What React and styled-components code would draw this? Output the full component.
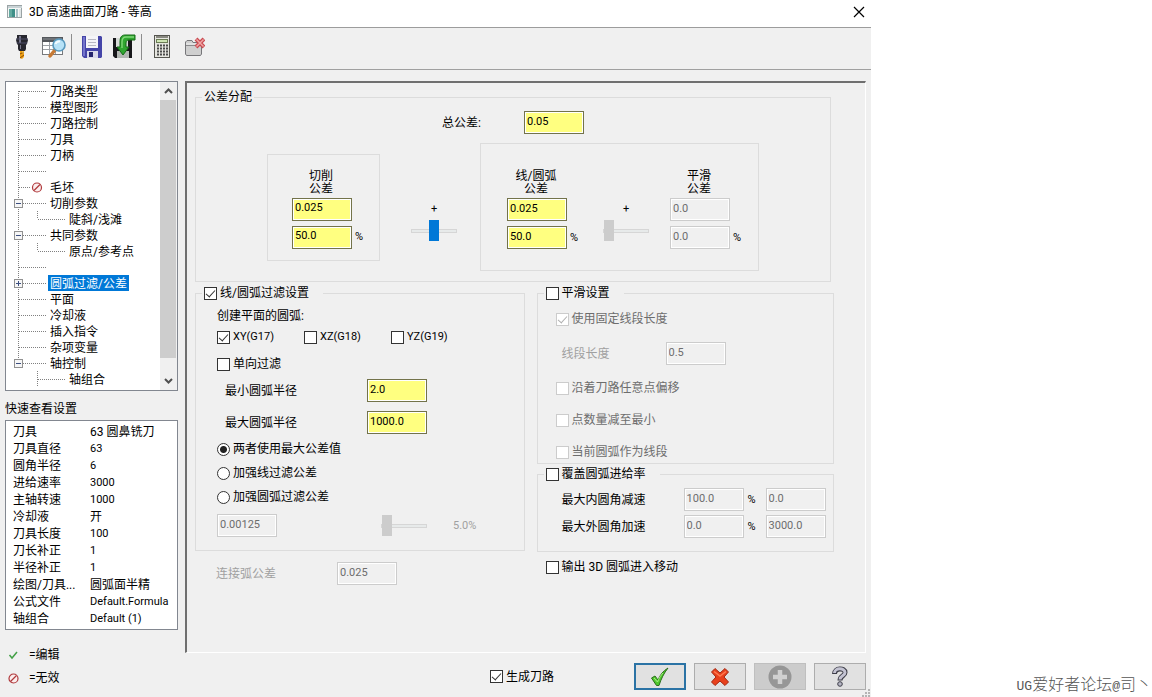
import React, { useState } from 'react'

import styled, { createGlobalStyle } from "styled-components";



const GlobalStyle = createGlobalStyle`
  * {
    box-sizing: border-box;
  }
  body {
    margin: 0;
    background: #ffffff;
    color: #000000;
    font-family: Roboto, "Noto Sans CJK SC", sans-serif;
    font-size: 12px;
    line-height: 16px;
  }
  button, input {
    font-family: inherit;
    margin: 0;
  }
`;

const Page = styled.div`
  display: grid;
  grid-template-columns: minmax(0, 1fr) 281px;
`;

const Dialog = styled.main`
  background: #f0f0f0;
  min-width: 0;
`;

const TitleBar = styled.header`
  display: flex;
  align-items: center;
  gap: 6px;
  height: 28px;
  padding: 0 6px 4px 7px;
  background: #ffffff;
  border-bottom: 1px solid #9c9c9c;
`;

const Title = styled.h1`
  flex: 1;
  margin: 0;
  font-size: 12px;
  font-weight: 400;
`;

const IconButton = styled.button`
  display: flex;
  align-items: center;
  justify-content: center;
  width: ${(props) => props.$width || 32}px;
  padding: 0;
  border: 0;
  background: transparent;
`;

const Toolbar = styled.div`
  display: flex;
  align-items: center;
  height: 42px;
  padding: 0 6px 4px;
  border-bottom: 1px solid #a0a0a0;
`;

const Divider = styled.span`
  width: 1px;
  height: 26px;
  margin: 0 4px 0 1px;
  background: #8c8c8c;
`;

const Body = styled.div`
  display: grid;
  grid-template-columns: 173px minmax(0, 1fr);
  gap: 7px;
  padding: 11px 5px 0;
`;

/* ---- left side ---- */

const TreeBox = styled.div`
  display: flex;
  height: 310px;
  background: #ffffff;
  border: 1px solid #828790;
`;

const TreeList = styled.ul`
  flex: 1;
  margin: 0;
  padding: 1px 0 0;
  overflow: hidden;
  list-style: none;
`;

const TreeRow = styled.li`
  display: flex;
  height: 16px;
  line-height: 18px;
  white-space: nowrap;
`;

const TreeLabel = styled.span`
  padding: 0 2px;
  color: ${(props) => (props.$selected ? '#ffffff' : '#000000')};
  background: ${(props) => (props.$selected ? '#0078d7' : 'transparent')};
`;

const ScrollBar = styled.div`
  display: flex;
  flex-direction: column;
  width: 17px;
  padding-right: 1px;
  background: #f0f0f0;
`;

const ScrollButton = styled.button`
  display: flex;
  align-items: center;
  justify-content: center;
  height: 18px;
  padding: 0;
  border: 0;
  background: #f0f0f0;
`;

const ScrollThumb = styled.div`
  flex: 1;
  margin-bottom: 14px;
  background: #cdcdcd;
`;

const SideTitle = styled.h2`
  margin: 10px 0 3px;
  font-size: 12px;
  font-weight: 400;
`;

const QuickBox = styled.div`
  height: 210px;
  padding: 2px 0;
  background: #ffffff;
  border: 1px solid #828790;
`;

const QuickTable = styled.table`
  width: 100%;
  border-collapse: collapse;
  table-layout: fixed;
`;

const QuickName = styled.th`
  width: 84px;
  height: 17px;
  padding: 0 0 0 7px;
  font-weight: 400;
  text-align: left;
`;

const QuickValue = styled.td`
  padding: 0;
  font-size: ${(props) => (props.$latin ? 11 : 12)}px;
  white-space: nowrap;
`;

const KeyRow = styled.div`
  display: flex;
  align-items: center;
  gap: 10px;
  height: 20px;
  margin-top: 3px;
  padding-left: 3px;
`;

const Keys = styled.div`
  padding-top: 12px;
`;

/* ---- right side ---- */

const Panel = styled.section`
  height: 572px;
  padding: 6px 31px 0 8px;
  border-style: solid;
  border-width: 2px 1px 1px 2px;
  border-color: #6f6f6f #ffffff #ffffff #6f6f6f;
`;

const Group = styled.fieldset`
  min-width: 0;
  margin: 0 ${(props) => props.$inset || 0}px 0 0;
  padding: 0;
  border: 1px solid #dcdcdc;
`;

const GroupTitle = styled.legend`
  height: 16px;
  margin-left: 6px;
  padding: 0 ${(props) => props.$after || 2}px 0 2px;
`;

const GroupBody = styled.div`
  padding: ${(props) => props.$padding};
`;

const Columns = styled.div`
  display: grid;
  grid-template-columns: 329fr 297fr;
  gap: 6px 12px;
  align-items: start;
  margin-top: 3px;
`;

const Stack = styled.div`
  display: flex;
  flex-direction: column;
  gap: ${(props) => props.$gap || 0}px;
`;

const Line = styled.div`
  display: flex;
  align-items: center;
  min-height: 18px;
  gap: ${(props) => props.$gap || 0}px;
  padding-top: ${(props) => props.$top || 0}px;
  padding-left: ${(props) => props.$indent || 0}px;
`;

const ThreeChecks = styled.div`
  display: grid;
  grid-template-columns: 87px 87px 87px;
  height: 18px;
`;

const FieldLabel = styled.label`
  flex: none;
  width: ${(props) => props.$width}px;
  color: ${(props) => (props.$off ? '#a0a0a0' : '#000000')};
`;

const Field = styled.input`
  flex: none;
  width: 60px;
  height: 23px;
  padding: 0 3px 3px 2px;
  border: 1px solid #73734a;
  border-radius: 0;
  outline: 0;
  background: #ffff80;
  box-shadow: inset 0 0 0 1px #ffffff;
  color: #000000;
  font-size: 11px;

  &:disabled {
    border-color: #cccccc;
    background: #f0f0f0;
    color: #6d6d6d;
  }
`;

const Percent = styled.span`
  font-size: 11px;
  color: ${(props) => (props.$off ? '#a0a0a0' : '#000000')};
`;

const TickLabel = styled.label`
  display: ${(props) => (props.$height ? 'flex' : 'inline-flex')};
  align-items: center;
  gap: 3px;
  height: ${(props) => props.$height || 18}px;
  font-size: ${(props) => (props.$latin ? 11 : 12)}px;
  color: ${(props) => (props.$off ? '#6d6d6d' : '#000000')};
  white-space: nowrap;
`;

const TickBox = styled.input`
  appearance: none;
  display: grid;
  justify-content: center;
  flex: none;
  width: 13px;
  height: 13px;
  border: 1px solid #333333;
  background: #ffffff;

  &:checked::before {
    content: "";
    width: 4px;
    height: 8px;
    border: solid #333333;
    border-width: 0 1px 1px 0;
    transform: rotate(42deg);
  }
  &:disabled {
    border-color: #cccccc;
  }
  &:disabled::before {
    border-color: #b0b0b0;
  }
`;

const RadioDot = styled.input`
  appearance: none;
  flex: none;
  width: 13px;
  height: 13px;
  border: 1px solid #333333;
  border-radius: 50%;
  background: #ffffff;

  &:checked {
    background: radial-gradient(circle, #222222 3px, #ffffff 4px);
  }
`;

const Range = styled.input`
  appearance: none;
  display: block;
  width: 46px;
  height: 21px;
  background: transparent;

  &::-webkit-slider-runnable-track {
    height: 4px;
    border: 1px solid #d6d6d6;
    background: #e7eaea;
  }
  &::-webkit-slider-thumb {
    appearance: none;
    width: 10px;
    height: 21px;
    margin-top: -10px;
    background: #0078d7;
  }
  &:disabled::-webkit-slider-thumb {
    background: #cccccc;
  }
`;

const TotalLine = styled.div`
  display: flex;
  align-items: center;
  justify-content: center;
  margin: 6px 0 9px;
`;

const Share = styled.div`
  display: flex;
  align-items: center;
  justify-content: center;
`;

const ShareBox = styled.div`
  display: flex;
  padding: ${(props) => props.$padding};
  border: 1px solid #dcdcdc;
`;

const ShareColumn = styled.div`
  width: 72px;
`;

const ShareTitle = styled.div`
  width: 58px;
  margin-bottom: 2px;
  line-height: 13px;
  text-align: center;
`;

const ShareSlider = styled.div`
  display: grid;
  row-gap: 5px;
  align-self: flex-start;
  margin: ${(props) => props.$margin};
  font-size: 11px;
  text-align: center;
  line-height: 12px;
`;

const RateGrid = styled.div`
  display: grid;
  grid-template-columns: 122px 60px 22px 60px;
  row-gap: 4px;
  align-items: center;
  text-align: left;
`;

const RateSign = styled.span`
  padding-left: 4px;
  font-size: 11px;
`;

const Footer = styled.footer`
  display: flex;
  align-items: center;
  justify-content: flex-end;
  gap: 8px;
  padding-top: 10px;
`;

const Generate = styled.div`
  display: flex;
  margin-right: 72px;
`;

const ActionButton = styled.button`
  display: flex;
  align-items: center;
  justify-content: center;
  width: 52px;
  height: 27px;
  padding: 0;
  border: ${(props) => (props.$main ? '2px solid #2b73a5' : '1px solid #adadad')};
  background: #e1e1e1;

  &:disabled {
    border-color: #bfbfbf;
    background: #cccccc;
  }
`;

const GripLine = styled.div`
  display: flex;
  justify-content: flex-end;
  margin-top: -1px;
`;

const Signature = styled.aside`
  align-self: end;
  display: flex;
  align-items: baseline;
  justify-content: flex-end;
  padding-bottom: 2px;
  color: #555555;
  font-family: "Noto Sans CJK SC", sans-serif;
  font-size: 16px;
  font-weight: 300;
  line-height: 18px;
  white-space: nowrap;
`;

const Mono = styled.span`
  font-family: "Liberation Mono", monospace;
  font-size: 13px;
`;



/* ---- icons ---- */

const WindowIcon = () => (
  <svg width="16" height="14" viewBox="0 0 16 14">
    <rect x="0.5" y="0.5" width="14" height="12" fill="#f4f6f6" stroke="#9aa3a5" />
    <rect x="1" y="1" width="14" height="2" fill="#c9d3d6" />
    <rect x="2" y="4" width="6" height="8" fill="#3f8f88" />
    <rect x="2" y="4" width="3" height="8" fill="#63aaa0" />
    <rect x="9" y="4" width="2" height="8" fill="#a9c3c8" />
    <rect x="12" y="4" width="2" height="8" fill="#dfe5e6" />
  </svg>
);

const CloseIcon = () => (
  <svg width="12" height="12" viewBox="0 0 12 12">
    <path d="M1 1 L11 11 M11 1 L1 11" stroke="#000000" strokeWidth="1.2" />
  </svg>
);

const ToolIcon = () => (
  <svg width="14" height="26" viewBox="0 0 14 26">
    <path d="M2 1 H12 L12 4 L13 6 L12 10 L11 11 V15 L10 17 H4 L3 15 V11 L2 10 L1 6 L2 4 Z" fill="#26262e" />
    <path d="M4 2 H6 V9 H4 Z M5 11 H6 V15 H5 Z" fill="#75758a" />
    <path d="M1 5 H13 M2 9 H12" stroke="#4c4c66" />
    <path d="M5 17 H9 V23 L7 25 L5 24 Z" fill="#f0a214" />
    <path d="M5 20 L9 18 M5 24 L9 21" stroke="#8a4a08" strokeWidth="1" />
    <path d="M8 17 V19" stroke="#ffe070" />
  </svg>
);

const PreviewIcon = () => (
  <svg width="26" height="24" viewBox="0 0 26 24">
    <rect x="1.5" y="2.5" width="20" height="17" fill="#ffffff" stroke="#77797c" />
    <rect x="1" y="2" width="21" height="5" fill="#55585c" />
    <path d="M2 4 H21" stroke="#8b8f94" />
    <path d="M2 10.5 H21 M2 14.5 H21 M8.5 7 V19 M14.5 7 V19" stroke="#9da1a6" />
    <path d="M14 15 L9 21" stroke="#c67a35" strokeWidth="3.5" strokeLinecap="round" />
    <circle cx="18" cy="10" r="6" fill="#b7e2f7" stroke="#5898bd" strokeWidth="1.6" />
    <path d="M14.5 9 A4 4 0 0 1 19 6.5" stroke="#f2fbff" strokeWidth="2" fill="none" />
  </svg>
);

const SaveIcon = () => (
  <svg width="22" height="24" viewBox="0 0 22 24">
    <path d="M1 1 H20 L21 2 V22 L20 23 H3 L1 21 Z" fill="#4545a8" />
    <path d="M2 2 H4 V21 H2 Z" fill="#7474cb" />
    <rect x="5" y="1" width="12" height="12" fill="#f5f5f8" />
    <path d="M7 4.5 H15 M7 7.5 H15 M7 10.5 H15" stroke="#b9b9c4" />
    <rect x="6" y="16" width="11" height="7" fill="#d9d9ea" />
    <rect x="8" y="17" width="4" height="5" fill="#24246c" />
  </svg>
);

const SaveDefaultIcon = () => (
  <svg width="24" height="25" viewBox="0 0 24 25">
    <path d="M1 4 H20 V24 H3 L1 22 Z" fill="#17171a" />
    <rect x="4" y="4" width="12" height="9" fill="#d8dcd8" />
    <rect x="5" y="17" width="12" height="7" fill="#b4b8b4" />
    <path d="M23 1 H13 C9 1 8 4 8 8 V13 H5 L11 21 L17 13 H14 V9 C14 7 15 6 17 6 H23 Z" fill="#2fa62f" stroke="#166b18" />
    <path d="M22 3 H14 C11 3 10 5 10 8 V14" stroke="#80d878" strokeWidth="1.4" fill="none" />
  </svg>
);

const CalcIcon = () => (
  <svg width="17" height="24" viewBox="0 0 17 24">
    <rect x="0.5" y="0.5" width="15" height="22" fill="#e6e6e0" stroke="#55554f" />
    <rect x="2" y="1" width="12" height="2" fill="#888880" />
    <rect x="2.5" y="4.5" width="11" height="3" fill="#cfe6b4" stroke="#6b7c55" />
    <path d="M3 10.5 H14 M3 13.5 H14 M3 16.5 H14 M3 19.5 H14" stroke="#4a4a4a" strokeWidth="2" strokeDasharray="2 1" />
  </svg>
);

const CloseFolderIcon = () => (
  <svg width="21" height="20" viewBox="0 0 21 20">
    <path d="M1.5 17 V5 L3 3.5 H8 L9 5.5 H17.5 V17 L16.5 18.5 H2.5 Z" fill="#cfcfcf" stroke="#77777a" />
    <path d="M2 8.5 H17" stroke="#8b8b8d" />
    <path d="M2 7 H17" stroke="#f3f3f3" />
    <path d="M12 2 L20 10 M20 2 L12 10" stroke="#c94a50" strokeWidth="4" />
    <path d="M12.5 2.5 L19.5 9.5 M19.5 2.5 L12.5 9.5" stroke="#f2a5a5" strokeWidth="1.5" />
  </svg>
);

const NoEntry = () => (
  <svg width="11" height="11" viewBox="0 0 11 11">
    <circle cx="5.5" cy="5.5" r="4.5" fill="#fbeeee" stroke="#b0393c" strokeWidth="1.2" />
    <path d="M2.5 8.5 L8.5 2.5" stroke="#b0393c" strokeWidth="1.2" />
  </svg>
);

const SmallTick = () => (
  <svg width="11" height="10" viewBox="0 0 11 10">
    <path d="M1.5 5 L4 8 L9 2" stroke="#43a047" strokeWidth="1.5" fill="none" />
  </svg>
);

const OkIcon = () => (
  <svg width="20" height="20" viewBox="0 0 20 20">
    <path d="M1.5 11 L5 9 L8 13 C10 8 13 4 18 1 C14 6 11 12 9 18.5 H6.5 Z" fill="#4fc72c" stroke="#2a6e1b" />
    <path d="M4 11 L7.5 15 C9 11 11 8 13 6" stroke="#a8ee80" fill="none" />
  </svg>
);

const CancelIcon = () => (
  <svg width="20" height="20" viewBox="0 0 20 20">
    <path d="M5 1.5 L10 6 L15 1.5 L18.5 5 L14 10 L18.5 15 L15 18.5 L10 14 L5 18.5 L1.5 15 L6 10 L1.5 5 Z" fill="#e8401c" stroke="#a32812" strokeLinejoin="round" />
    <path d="M4 4.5 L10 9 L16 4.5" stroke="#ff7a50" strokeWidth="1.5" fill="none" />
  </svg>
);

const PlusIcon = () => (
  <svg width="24" height="24" viewBox="0 0 24 24">
    <circle cx="12" cy="12" r="11.5" fill="#969696" />
    <path d="M12 5 V19 M5 12 H19" stroke="#d0d0d0" strokeWidth="4.5" />
  </svg>
);

const HelpIcon = () => (
  <svg width="18" height="21" viewBox="0 0 18 21">
    <path d="M3.5 8 C3.5 1.500 14 1.500 14 6.500 C14 10 9 9.500 9 14.500" stroke="#3d3d48" strokeWidth="5" fill="none" />
    <path d="M3.5 7 C3.5 1.500 14 1.500 14 6.500 C14 10 9 9.500 9 13.500" stroke="#c3c3d2" strokeWidth="3" fill="none" />
    <circle cx="9" cy="18" r="2.3" fill="#b6b6c4" stroke="#3d3d48" />
  </svg>
);

const GripIcon = () => (
  <svg width="9" height="9" viewBox="0 0 9 9" fill="#b4b4b4">
    <path d="M6 0 H8 V2 H6 Z M3 3 H5 V5 H3 Z M6 3 H8 V5 H6 Z M0 6 H2 V8 H0 Z M3 6 H5 V8 H3 Z M6 6 H8 V8 H6 Z" />
  </svg>
);

const Chevron = ({ down }) => (
  <svg width="9" height="6" viewBox="0 0 9 6">
    <path d={down ? 'M1 1 L4.5 4.5 L8 1' : 'M1 5 L4.5 1.5 L8 5'} stroke="#505050" strokeWidth="2" fill="none" />
  </svg>
);

// dotted branch in front of a tree label
function Branch({ item }) {
  const child = item.level === 1;
  const x = child ? 31.5 : 12.5;
  const top = item.first ? 8 : 0;
  const bottom = item.last ? 8 : 16;
  return (
    <svg width={child ? 61 : 42} height="16" shapeRendering="crispEdges">
      <g stroke="#808080" strokeDasharray="1 1">
        {child && item.inside && <path d="M12.5 0 V16" />}
        <path d={`M${x} ${top} V${bottom}`} />
        <path d={`M${x} 8.5 H${item.blocked ? 24 : x + 27}`} />
      </g>
      {item.box && (
        <g>
          <rect x="8.5" y="4.5" width="8" height="8" fill="#f6f6f6" stroke="#919191" />
          <path d="M10 8.5 H15" stroke="#3c4f80" />
          {item.box === '+' && <path d="M12.5 6 V11" stroke="#3c4f80" />}
        </g>
      )}
      {item.blocked && (
        <g shapeRendering="auto" stroke="#b0393c" strokeWidth="1.2">
          <circle cx="31" cy="8.5" r="4.5" fill="#fbeeee" />
          <path d="M28 11.5 L34 5.5" />
        </g>
      )}
    </svg>
  );
}



const tree = [
  { text: '刀路类型', first: true },
  { text: '模型图形' },
  { text: '刀路控制' },
  { text: '刀具' },
  { text: '刀柄' },
  { text: '' },
  { text: '毛坯', blocked: true },
  { text: '切削参数', box: '-' },
  { text: '陡斜/浅滩', level: 1, inside: true, last: true },
  { text: '共同参数', box: '-' },
  { text: '原点/参考点', level: 1, inside: true, last: true },
  { text: '' },
  { text: '圆弧过滤/公差', box: '+' },
  { text: '平面' },
  { text: '冷却液' },
  { text: '插入指令' },
  { text: '杂项变量' },
  { text: '轴控制', box: '-', last: true },
  { text: '轴组合', level: 1 },
];

const quick = [
  ['刀具', '63 圆鼻铣刀'],
  ['刀具直径', '63'],
  ['圆角半径', '6'],
  ['进给速率', '3000'],
  ['主轴转速', '1000'],
  ['冷却液', '开'],
  ['刀具长度', '100'],
  ['刀长补正', '1'],
  ['半径补正', '1'],
  ['绘图/刀具...', '圆弧面半精'],
  ['公式文件', 'Default.Formula'],
  ['轴组合', 'Default (1)'],
];

function Tick({ text, checked, off, latin, height }) {
  return (
    <TickLabel $off={off} $latin={latin} $height={height}>
      <TickBox type="checkbox" defaultChecked={checked} disabled={off} />
      {text}
    </TickLabel>
  );
}

function ShareFields({ title, top, bottom, off }) {
  return (
    <ShareColumn>
      <ShareTitle>{title}<br />公差</ShareTitle>
      <Stack $gap={5}>
        <Field aria-label={title + '公差'} defaultValue={top} disabled={off} />
        <Line $gap={3}>
          <Field aria-label={title + '公差 %'} defaultValue={bottom} disabled={off} />
          <Percent>%</Percent>
        </Line>
      </Stack>
    </ShareColumn>
  );
}

    export default function App() {

    const [selected, setSelected] = useState('圆弧过滤/公差');
    const [mode, setMode] = useState('两者使用最大公差值');

    return (
      <Page>
        <GlobalStyle />
        <Dialog>
          <TitleBar>
            <WindowIcon />
            <Title>3D 高速曲面刀路 - 等高</Title>
            <IconButton type="button" $width={12} aria-label="关闭"><CloseIcon /></IconButton>
          </TitleBar>

          <Toolbar>
            <IconButton type="button" aria-label="刀具"><ToolIcon /></IconButton>
            <IconButton type="button" aria-label="预览"><PreviewIcon /></IconButton>
            <Divider />
            <IconButton type="button" aria-label="保存"><SaveIcon /></IconButton>
            <IconButton type="button" aria-label="载入"><SaveDefaultIcon /></IconButton>
            <Divider />
            <IconButton type="button" aria-label="计算器"><CalcIcon /></IconButton>
            <IconButton type="button" aria-label="清除"><CloseFolderIcon /></IconButton>
          </Toolbar>

          <Body>
            <div>
              <TreeBox>
                <TreeList>
                  {tree.map((item, i) => (
                    <TreeRow key={i} onClick={() => item.text && setSelected(item.text)}>
                      <Branch item={item} />
                      {item.text && (
                        <TreeLabel $selected={item.text === selected}>{item.text}</TreeLabel>
                      )}
                    </TreeRow>
                  ))}
                </TreeList>
                <ScrollBar>
                  <ScrollButton type="button" aria-label="向上"><Chevron /></ScrollButton>
                  <ScrollThumb />
                  <ScrollButton type="button" aria-label="向下"><Chevron down /></ScrollButton>
                </ScrollBar>
              </TreeBox>

              <SideTitle>快速查看设置</SideTitle>
              <QuickBox>
                <QuickTable>
                  <tbody>
                    {quick.map(([name, value]) => (
                      <tr key={name}>
                        <QuickName scope="row">{name}</QuickName>
                        <QuickValue $latin={/^[\w. ()]+$/.test(value)}>{value}</QuickValue>
                      </tr>
                    ))}
                  </tbody>
                </QuickTable>
              </QuickBox>

              <Keys>
                <KeyRow><SmallTick />=编辑</KeyRow>
                <KeyRow><NoEntry />=无效</KeyRow>
              </Keys>
            </div>

            <div>
              <Panel>
                <Group $inset={3}>
                  <GroupTitle>公差分配</GroupTitle>
                  <GroupBody $padding="0 0 10px">
                    <TotalLine>
                      <FieldLabel $width={82} htmlFor="total">总公差:</FieldLabel>
                      <Field id="total" defaultValue="0.05" />
                    </TotalLine>
                    <Share>
                      <ShareBox $padding="15px 15px 11px 24px">
                        <ShareFields title="切削" top="0.025" bottom="50.0" />
                      </ShareBox>
                      <ShareSlider $margin="60px 23px 0 31px">
                        +
                        <Range type="range" aria-label="切削比例" defaultValue="50" />
                      </ShareSlider>
                      <ShareBox $padding="26px 16px 21px 26px">
                        <ShareFields title="线/圆弧" top="0.025" bottom="50.0" />
                        <ShareSlider $margin="33px 21px 0 24px">
                          +
                          <Range type="range" aria-label="平滑比例" defaultValue="0" disabled />
                        </ShareSlider>
                        <ShareFields title="平滑" top="0.0" bottom="0.0" off />
                      </ShareBox>
                    </Share>
                  </GroupBody>
                </Group>

                <Columns>
                  <Group>
                    <GroupTitle $after={14}>
                      <Tick text="线/圆弧过滤设置" checked height={16} />
                    </GroupTitle>
                    <GroupBody $padding="6px 0 13px 21px">
                      <Stack $gap={6}>
                        <Stack $gap={9}>
                          <Stack $gap={3}>
                            <Line>创建平面的圆弧:</Line>
                            <ThreeChecks>
                              <Tick text="XY(G17)" checked latin />
                              <Tick text="XZ(G18)" latin />
                              <Tick text="YZ(G19)" latin />
                            </ThreeChecks>
                          </Stack>
                          <Tick text="单向过滤" />
                        </Stack>
                        <Stack $gap={9}>
                          <Line $indent={8}>
                            <FieldLabel $width={142} htmlFor="min">最小圆弧半径</FieldLabel>
                            <Field id="min" defaultValue="2.0" />
                          </Line>
                          <Line $indent={8}>
                            <FieldLabel $width={142} htmlFor="max">最大圆弧半径</FieldLabel>
                            <Field id="max" defaultValue="1000.0" />
                          </Line>
                        </Stack>
                        {['两者使用最大公差值', '加强线过滤公差', '加强圆弧过滤公差'].map((text) => (
                          <TickLabel key={text}>
                            <RadioDot
                              type="radio"
                              name="mode"
                              checked={mode === text}
                              onChange={() => setMode(text)}
                            />
                            {text}
                          </TickLabel>
                        ))}
                        <Line $top={2}>
                          <FieldLabel $width={164}>
                            <Field aria-label="过滤公差" defaultValue="0.00125" disabled />
                          </FieldLabel>
                          <Line $gap={26}>
                            <Range type="range" aria-label="过滤比例" defaultValue="0" disabled />
                            <Percent $off>5.0%</Percent>
                          </Line>
                        </Line>
                      </Stack>
                    </GroupBody>
                  </Group>

                  <Stack $gap={2}>
                    <Group>
                      <GroupTitle $after={14}>
                        <Tick text="平滑设置" height={16} />
                      </GroupTitle>
                      <GroupBody $padding="9px 0 2px 18px">
                        <Stack $gap={14}>
                          <Tick text="使用固定线段长度" checked off />
                          <Line $indent={6}>
                            <FieldLabel $width={104} $off htmlFor="segment">线段长度</FieldLabel>
                            <Field id="segment" defaultValue="0.5" disabled />
                          </Line>
                          <Tick text="沿着刀路任意点偏移" off />
                          <Tick text="点数量减至最小" off />
                          <Tick text="当前圆弧作为线段" off />
                        </Stack>
                      </GroupBody>
                    </Group>

                    <Group>
                      <GroupTitle $after={14}>
                        <Tick text="覆盖圆弧进给率" height={16} />
                      </GroupTitle>
                      <GroupBody $padding="6px 0 13px 24px">
                        <RateGrid>
                          <label htmlFor="inner">最大内圆角减速</label>
                          <Field id="inner" defaultValue="100.0" disabled />
                          <RateSign>%</RateSign>
                          <Field aria-label="最大内圆角减速值" defaultValue="0.0" disabled />
                          <label htmlFor="outer">最大外圆角加速</label>
                          <Field id="outer" defaultValue="0.0" disabled />
                          <RateSign>%</RateSign>
                          <Field aria-label="最大外圆角加速值" defaultValue="3000.0" disabled />
                        </RateGrid>
                      </GroupBody>
                    </Group>
                  </Stack>

                  <Line $indent={21} $top={4}>
                    <FieldLabel $width={121} $off htmlFor="link">连接弧公差</FieldLabel>
                    <Field id="link" defaultValue="0.025" disabled />
                  </Line>
                  <Line $indent={9}>
                    <Tick text="输出 3D 圆弧进入移动" />
                  </Line>
                </Columns>
              </Panel>

              <Footer>
                <Generate><Tick text="生成刀路" checked /></Generate>
                <ActionButton type="button" $main aria-label="确定"><OkIcon /></ActionButton>
                <ActionButton type="button" aria-label="取消"><CancelIcon /></ActionButton>
                <ActionButton type="button" disabled aria-label="应用"><PlusIcon /></ActionButton>
                <ActionButton type="button" aria-label="帮助"><HelpIcon /></ActionButton>
              </Footer>
            </div>
          </Body>
          <GripLine><GripIcon /></GripLine>
        </Dialog>

        <Signature>
          <Mono>UG</Mono>爱好者论坛<Mono>@</Mono>司丶
        </Signature>
      </Page>
    );
}
